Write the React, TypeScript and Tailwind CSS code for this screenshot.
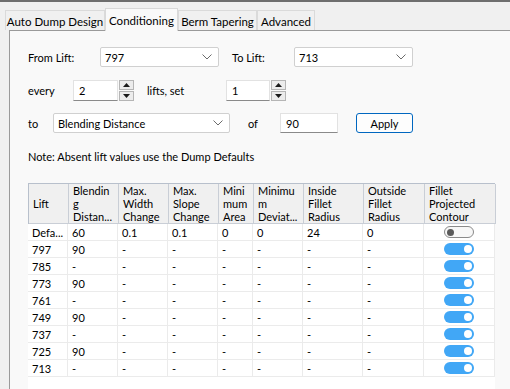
import React from 'react';

interface Column {
  w: number;
  head: string[];
}

const columns: Column[] = [
  { w: 40, head: ['Lift'] },
  { w: 50, head: ['Blendin', 'g', 'Distan...'] },
  { w: 50, head: ['Max.', 'Width', 'Change'] },
  { w: 50, head: ['Max.', 'Slope', 'Change'] },
  { w: 35, head: ['Mini', 'mum', 'Area'] },
  { w: 50, head: ['Minimu', 'm', 'Deviat...'] },
  { w: 60, head: ['Inside', 'Fillet', 'Radius'] },
  { w: 61, head: ['Outside', 'Fillet', 'Radius'] },
  { w: 71, head: ['Fillet', 'Projected', 'Contour'] },
];

const rows: { cells: string[]; on: boolean }[] = [
  { cells: ['Defa...', '60', '0.1', '0.1', '0', '0', '24', '0'], on: false },
  { cells: ['797', '90', '-', '-', '-', '-', '-', '-'], on: true },
  { cells: ['785', '-', '-', '-', '-', '-', '-', '-'], on: true },
  { cells: ['773', '90', '-', '-', '-', '-', '-', '-'], on: true },
  { cells: ['761', '-', '-', '-', '-', '-', '-', '-'], on: true },
  { cells: ['749', '90', '-', '-', '-', '-', '-', '-'], on: true },
  { cells: ['737', '-', '-', '-', '-', '-', '-', '-'], on: true },
  { cells: ['725', '90', '-', '-', '-', '-', '-', '-'], on: true },
  { cells: ['713', '-', '-', '-', '-', '-', '-', '-'], on: true },
];

const tabs = [
  { label: 'Auto Dump Design', w: 'w-[100px]' },
  { label: 'Conditioning', w: 'w-[73px]' },
  { label: 'Berm Tapering', w: 'w-[79px]' },
  { label: 'Advanced', w: 'w-[58px]' },
];

const Chevron = () => (
  <svg width="10" height="6" viewBox="0 0 10 6" className="shrink-0">
    <path d="M0.5 0.5 L5 5 L9.5 0.5" fill="none" stroke="#6b6b6b" strokeWidth="1" />
  </svg>
);

const Select = ({ value, width }: { value: string; width: string }) => (
  <div
    className={`${width} h-[20px] flex items-center justify-between pl-[4px] pr-[6px] bg-white border border-[#d0d0d0] rounded-[2px]`}
  >
    <span>{value}</span>
    <Chevron />
  </div>
);

const Spinner = ({ value, width }: { value: string; width: string }) => (
  <div className="flex items-center h-[21px]">
    <div
      className={`${width} h-[21px] flex items-center pl-[5px] bg-white border border-[#e2e2e2] border-b-[#8a8a8a]`}
    >
      {value}
    </div>
    <div className="flex flex-col gap-[1px] ml-[1px]">
      <div className="w-[15px] h-[10px] flex items-center justify-center bg-[#ececec] border border-[#b5b5b5]">
        <svg width="7" height="4" viewBox="0 0 7 4">
          <path d="M0 4 L3.5 0 L7 4 Z" fill="#1a1a1a" />
        </svg>
      </div>
      <div className="w-[15px] h-[10px] flex items-center justify-center bg-[#ececec] border border-[#b5b5b5]">
        <svg width="7" height="4" viewBox="0 0 7 4">
          <path d="M0 0 L3.5 4 L7 0 Z" fill="#1a1a1a" />
        </svg>
      </div>
    </div>
  </div>
);

const Toggle = ({ on }: { on: boolean }) =>
  on ? (
    <div className="w-[30px] h-[12px] rounded-full bg-[#41a7f6] flex items-center justify-end pr-[2px]">
      <div className="w-[8px] h-[8px] rounded-full bg-white" />
    </div>
  ) : (
    <div className="w-[30px] h-[12px] rounded-full bg-[#f7f7f7] border border-[#8a8a8a] flex items-center pl-[2px]">
      <div className="w-[7px] h-[7px] rounded-full bg-[#5a5a5a]" />
    </div>
  );

const App = () => {
  return (
    <div className="w-[510px] h-[389px] overflow-hidden flex flex-col bg-[#f0f0f0] text-[11px] leading-[13px] text-black font-['Lato',sans-serif] border-t-2 border-[#6e6e6e]">
      <div className="flex flex-row items-end h-[28px] pl-[5px] shrink-0 text-[11.5px]">
        {tabs.map((t) =>
          t.label === 'Conditioning' ? (
            <div
              key={t.label}
              className={`${t.w} h-[23px] -mb-[1px] flex items-center justify-center whitespace-nowrap bg-[#f9f9f9] border border-b-0 border-[#d9d9d9] relative z-10`}
            >
              {t.label}
            </div>
          ) : (
            <div
              key={t.label}
              className={`${t.w} h-[20px] flex items-center justify-center whitespace-nowrap pt-[1px] bg-[#f0f0f0] border border-b-0 border-[#dadada]`}
            >
              {t.label}
            </div>
          )
        )}
      </div>
      <div className="flex-1 ml-[9px] bg-[#f9f9f9] border-l border-t border-[#9a9a9a] pl-[18px] pt-[16px] flex flex-col">
        <div className="flex flex-row items-center h-[20px]">
          <span className="w-[72px]">From Lift:</span>
          <Select value="797" width="w-[119px]" />
          <span className="w-[62px] ml-[13px]">To Lift:</span>
          <Select value="713" width="w-[119px]" />
        </div>
        <div className="flex flex-row items-center mt-[13px]">
          <span className="w-[45px]">every</span>
          <Spinner value="2" width="w-[45px]" />
          <span className="w-[79px] ml-[13px]">lifts, set</span>
          <Spinner value="1" width="w-[44px]" />
        </div>
        <div className="flex flex-row items-center mt-[12px] h-[20px]">
          <span className="w-[25px]">to</span>
          <Select value="Blending Distance" width="w-[177px]" />
          <span className="w-[32px] ml-[18px]">of</span>
          <div className="w-[58px] h-[20px] flex items-center pl-[5px] bg-white border border-[#e2e2e2] border-b-[#8a8a8a]">
            90
          </div>
          <button className="ml-[18px] w-[57px] h-[20px] flex items-center justify-center bg-[#fdfdfd] border border-[#0067c0] rounded-[3px]">
            Apply
          </button>
        </div>
        <div className="mt-[17px]">Note: Absent lift values use the Dump Defaults</div>
        <div className="mt-[20px] flex-1 w-[467px] bg-white flex flex-col">
          <div className="flex flex-row h-[41px] bg-[#f0f0f0] border-t border-l border-[#b8c0cc]">
            {columns.map((c, i) => (
              <div
                key={i}
                style={{ width: c.w }}
                className="shrink-0 h-full overflow-hidden flex flex-col justify-center pl-[4px] border-r border-b border-[#c9ced6]"
              >
                {c.head.map((h, j) => (
                  <span key={j} className="whitespace-nowrap leading-[13px]">
                    {h}
                  </span>
                ))}
              </div>
            ))}
          </div>
          {rows.map((r, ri) => (
            <div key={ri} className="flex flex-row h-[17px]">
              {r.cells.map((v, ci) => (
                <div
                  key={ci}
                  style={{ width: columns[ci].w }}
                  className="shrink-0 h-full flex items-center pl-[4px] border-r border-b border-[#ebebeb]"
                >
                  {v}
                </div>
              ))}
              <div
                style={{ width: columns[8].w }}
                className="shrink-0 h-full flex items-center justify-center border-r border-b border-[#ebebeb]"
              >
                <Toggle on={r.on} />
              </div>
            </div>
          ))}
        </div>
      </div>
    </div>
  );
};

export default App;
